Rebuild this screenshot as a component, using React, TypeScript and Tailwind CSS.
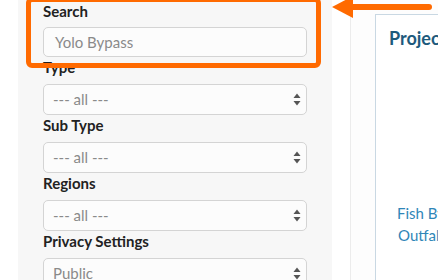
import React from "react";

const font = { fontFamily: "Lato, 'Open Sans', sans-serif" };

function Arrows() {
  return (
    <svg width="8" height="13" viewBox="0 0 8 13" className="shrink-0">
      <polygon points="4,0.5 7.5,5 0.5,5" fill="#555" />
      <polygon points="0.5,8 7.5,8 4,12.5" fill="#555" />
    </svg>
  );
}

function Label({ children, first }: { children: React.ReactNode; first?: boolean }) {
  return (
    <div className={`text-[15px] leading-[20px] font-bold text-[#222] ${first ? "mb-[6px]" : "mb-[7px]"}`}>
      {children}
    </div>
  );
}

function Select({ value }: { value: string }) {
  return (
    <div className="h-[31px] rounded-[5px] border border-[#d4d4d4] bg-[#fcfcfc] flex items-center justify-between pl-[9px] pr-[5px]">
      <span className="text-[15px] text-[#8a8a8a]">{value}</span>
      <Arrows />
    </div>
  );
}

export default function App() {
  return (
    <div className="relative w-[438px] h-[280px] overflow-hidden bg-white flex" style={font}>
      <div className="w-[18px] shrink-0" />
      <div className="w-[314px] shrink-0 bg-[#f7f7f7] px-[25px] pt-[1px]">
        <Label first>Search</Label>
        <div className="h-[30px] rounded-[5px] border border-[#d4d4d4] bg-[#fcfcfc] flex items-center pl-[11px]">
          <span className="text-[15px] text-[#8a8a8a]">Yolo Bypass</span>
        </div>
        <Label>Type</Label>
        <Select value="--- all ---" />
        <Label>Sub Type</Label>
        <Select value="--- all ---" />
        <Label>Regions</Label>
        <Select value="--- all ---" />
        <Label>Privacy Settings</Label>
        <Select value="Public" />
      </div>
      <div className="w-[18px] shrink-0" />
      <div className="flex-1 border-l border-[#ececec] bg-[#fdfdfd] pl-[24px] pt-[14px]">
        <div className="h-full w-[200px] border-l border-t border-[#c9d8e3] bg-white pt-[12px] pl-[13px]">
          <div className="text-[18px] leading-[22px] font-bold text-[#1d5a7c] whitespace-nowrap">Projects</div>
          <div className="mt-[153px] pl-[8px] text-[15px] leading-[22px] text-[#2f86b8] whitespace-nowrap">
            <div>Fish Bypass</div>
            <div className="pl-[1px]">Outfall</div>
          </div>
        </div>
      </div>

      <div className="absolute left-[26px] top-[-3px] w-[295px] h-[71px] border-[5px] border-[#ff6a00] rounded-[6px]" />
      <svg className="absolute left-[330px] top-[-5px]" width="108" height="25" viewBox="0 0 108 25">
        <line x1="20" y1="12" x2="99" y2="12" stroke="#ff6a00" strokeWidth="6" strokeLinecap="round" />
        <polygon points="2,12 23,1 23,23" fill="#ff6a00" />
      </svg>
    </div>
  );
}
